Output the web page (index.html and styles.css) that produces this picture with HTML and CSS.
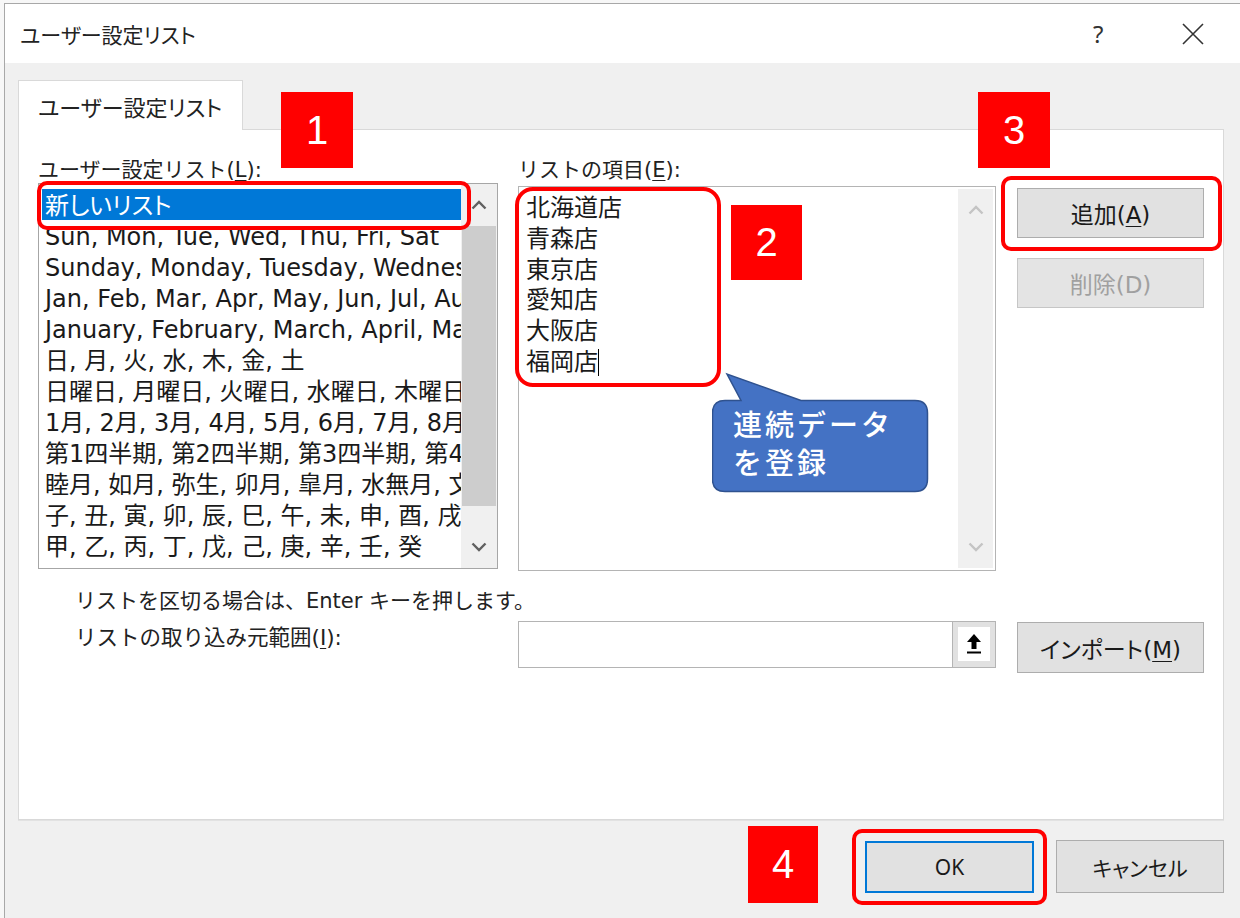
FILE: index.html
```html
<!DOCTYPE html>
<html lang="ja">
<head>
    <meta charset="UTF-8">
    <title>ユーザー設定リスト</title>
    <link rel="stylesheet" href="styles.css">
</head>
<body>
<div class="screen">

    <div class="window">
        <div class="titlebar">
            <div class="title">ユーザー設定リスト</div>
            <div class="help">?</div>
            <div class="close">
                <svg width="22" height="22" viewBox="0 0 22 22"><path d="M1 1 L21 21 M21 1 L1 21" stroke="#333" stroke-width="1.6" fill="none"/></svg>
            </div>
        </div>

        <div class="dialog-body">
            <div class="tabs">
                <div class="tab">ユーザー設定リスト</div>
            </div>

            <div class="panel">
                <div class="columns">
                    <div class="col col-lists">
                        <div class="label">ユーザー設定リスト(<u>L</u>):</div>
                        <div class="listbox">
                            <div class="list-items">
                                <div class="item selected">新しいリスト</div>
                                <div class="item">Sun, Mon, Tue, Wed, Thu, Fri, Sat</div>
                                <div class="item">Sunday, Monday, Tuesday, Wednesday, Thursday, Friday, Saturday</div>
                                <div class="item">Jan, Feb, Mar, Apr, May, Jun, Jul, Aug, Sep, Oct, Nov, Dec</div>
                                <div class="item">January, February, March, April, May, June</div>
                                <div class="item">日, 月, 火, 水, 木, 金, 土</div>
                                <div class="item">日曜日, 月曜日, 火曜日, 水曜日, 木曜日, 金曜日, 土曜日</div>
                                <div class="item">1月, 2月, 3月, 4月, 5月, 6月, 7月, 8月, 9月</div>
                                <div class="item">第1四半期, 第2四半期, 第3四半期, 第4四半期</div>
                                <div class="item">睦月, 如月, 弥生, 卯月, 皐月, 水無月, 文月</div>
                                <div class="item">子, 丑, 寅, 卯, 辰, 巳, 午, 未, 申, 酉, 戌, 亥</div>
                                <div class="item">甲, 乙, 丙, 丁, 戊, 己, 庚, 辛, 壬, 癸</div>
                            </div>
                            <div class="scrollbar">
                                <div class="arrow">
                                    <svg width="16" height="10" viewBox="0 0 16 10"><path d="M1.5 8.5 L8 2 L14.5 8.5" stroke="#606060" stroke-width="2.4" fill="none"/></svg>
                                </div>
                                <div class="track"><div class="thumb"></div></div>
                                <div class="arrow">
                                    <svg width="16" height="10" viewBox="0 0 16 10"><path d="M1.5 1.5 L8 8 L14.5 1.5" stroke="#606060" stroke-width="2.4" fill="none"/></svg>
                                </div>
                            </div>
                        </div>
                    </div>

                    <div class="col col-entries">
                        <div class="label">リストの項目(<u>E</u>):</div>
                        <div class="textarea">
                            <div class="entries">
                                <div class="entry">北海道店</div>
                                <div class="entry">青森店</div>
                                <div class="entry">東京店</div>
                                <div class="entry">愛知店</div>
                                <div class="entry">大阪店</div>
                                <div class="entry">福岡店<span class="caret"></span></div>
                            </div>
                            <div class="scrollbar light">
                                <div class="arrow">
                                    <svg width="16" height="10" viewBox="0 0 16 10"><path d="M1.5 8.5 L8 2 L14.5 8.5" stroke="#c4c4c4" stroke-width="2.4" fill="none"/></svg>
                                </div>
                                <div class="track"></div>
                                <div class="arrow">
                                    <svg width="16" height="10" viewBox="0 0 16 10"><path d="M1.5 1.5 L8 8 L14.5 1.5" stroke="#c4c4c4" stroke-width="2.4" fill="none"/></svg>
                                </div>
                            </div>
                        </div>
                    </div>

                    <div class="col col-buttons">
                        <button class="btn">追加(<u>A</u>)</button>
                        <button class="btn disabled">削除(D)</button>
                    </div>
                </div>

                <div class="hint">リストを区切る場合は、Enter キーを押します。</div>

                <div class="import-row">
                    <div class="import-label">リストの取り込み元範囲(<u>I</u>):</div>
                    <div class="range-input">
                        <div class="range-btn">
                            <svg width="16" height="22" viewBox="0 0 16 22"><path d="M8 1 L15 9 H10.5 V16 H5.5 V9 H1 Z" fill="#000"/><rect x="1" y="18.5" width="14" height="2" fill="#000"/></svg>
                        </div>
                    </div>
                    <button class="btn import-btn">インポート(<u>M</u>)</button>
                </div>
            </div>

            <div class="footer">
                <button class="btn ok">OK</button>
                <button class="btn">キャンセル</button>
            </div>
        </div>
    </div>

    <!-- annotations -->
    <div class="mark mark-1"></div>
    <div class="mark mark-2"></div>
    <div class="mark mark-3"></div>
    <div class="mark mark-4"></div>

    <div class="badge badge-1">1</div>
    <div class="badge badge-2">2</div>
    <div class="badge badge-3">3</div>
    <div class="badge badge-4">4</div>

    <div class="callout">
        <svg class="callout-shape" width="218" height="122" viewBox="0 0 218 122">
            <path d="M13 28.5 H29 L15 2 L89 28.5 H203 Q215.5 28.5 215.5 41 V107 Q215.5 119.5 203 119.5 H13 Q0.5 119.5 0.5 107 V41 Q0.5 28.5 13 28.5 Z" fill="#4472c4" stroke="#2f528f" stroke-width="1.5"/>
        </svg>
        <div class="callout-text">連続データ<br>を登録</div>
    </div>

</div>
</body>
</html>
```

FILE: styles.css
```css
* {
    box-sizing: border-box;
}

body {
    margin: 0;
    font-family: "DejaVu Sans", "Noto Sans CJK JP", sans-serif;
    color: #1a1a1a;
    background: #fafafa;
}

u {
    text-decoration: underline;
    text-underline-offset: 3px;
    text-decoration-thickness: 1px;
}

.screen {
    position: relative;
    width: 1240px;
    height: 918px;
    overflow: hidden;
    background: #f7f7f7;
}

.window {
    margin: 3px 0 0 4px;
    width: 1236px;
    height: 915px;
    border-top: 1px solid #a8a8a8;
    border-left: 1px solid #a8a8a8;
    background: #f0f0f0;
}

/* title bar */

.titlebar {
    height: 59px;
    background: #fff;
    display: flex;
    align-items: center;
    padding-left: 15px;
}

.title {
    font-size: 21px;
    font-feature-settings: "palt";
    flex: 1;
    color: #222;
}

.help {
    font-family: "Noto Sans", sans-serif;
    font-size: 24px;
    color: #333;
    width: 30px;
    margin-right: 59px;
}

.close {
    width: 58px;
    display: flex;
}

/* body */

.dialog-body {
    padding: 17px 16px 0 13px;
}

.tabs {
    display: flex;
}

.tab {
    width: 225px;
    height: 50px;
    background: #fff;
    border: 1px solid #d9d9d9;
    border-bottom: none;
    margin-bottom: -1px;
    position: relative;
    font-size: 22px;
    font-feature-settings: "palt";
    padding: 9px 0 0 19px;
    color: #222;
}

.panel {
    height: 691px;
    background: #fff;
    border: 1px solid #d9d9d9;
    box-shadow: 0 1px 0 #e2e2e2;
    padding: 27px 0 0 19px;
}

.columns {
    display: flex;
    gap: 20px;
}

.col {
    display: flex;
    flex-direction: column;
}

.label {
    font-size: 21px;
    height: 26px;
    line-height: 26px;
    color: #222;
}

/* left list */

.col-lists {
    width: 460px;
}

.listbox {
    height: 386px;
    border: 1px solid #a6a6a6;
    display: flex;
    background: #fff;
}

.list-items {
    flex: 1;
    overflow: hidden;
    padding: 5px 0 0 3px;
}

.item {
    height: 31px;
    padding: 4px 0 0 3px;
    line-height: 27px;
    font-size: 24px;
    font-feature-settings: "palt";
    white-space: nowrap;
    color: #1a1a1a;
}

.item.selected {
    background: #0078d7;
    color: #fff;
}

.scrollbar {
    width: 36px;
    display: flex;
    flex-direction: column;
    background: #f0f0f0;
}

.arrow {
    height: 42px;
    display: flex;
    align-items: center;
    justify-content: center;
}

.track {
    flex: 1;
}

.thumb {
    margin: 0 1px;
    height: 280px;
    background: #cdcdcd;
}

/* middle text area */

.col-entries {
    width: 478px;
}

.textarea {
    margin-top: 3px;
    height: 385px;
    border: 1px solid #b4b4b4;
    display: flex;
    background: #fff;
}

.entries {
    flex: 1;
    padding: 6px 0 0 7px;
}

.entry {
    height: 30.8px;
    line-height: 30.8px;
    font-size: 24px;
    color: #1a1a1a;
}

.caret {
    display: inline-block;
    width: 1px;
    height: 27px;
    background: #000;
    vertical-align: -6px;
    margin-left: 0;
}

.scrollbar.light {
    margin: 2px 2px 2px 0;
    width: 35px;
}

/* right buttons */

.col-buttons {
    margin-left: 1px;
    width: 187px;
    padding-top: 31px;
    gap: 20px;
}

.btn {
    font-family: "DejaVu Sans", "Noto Sans CJK JP", sans-serif;
    font-size: 23px;
    font-feature-settings: "palt";
    color: #1a1a1a;
    background: #e1e1e1;
    border: 1px solid #adadad;
    height: 50px;
    width: 187px;
    padding: 0;
}

.btn.disabled {
    color: #a0a0a0;
    background: #e4e4e4;
    border-color: #c6c6c6;
}

/* bottom of panel */

.hint {
    margin-top: 17px;
    padding-left: 37px;
    font-size: 21px;
    line-height: 26px;
    color: #222;
}

.import-row {
    margin-top: 7px;
    display: flex;
    align-items: flex-start;
}

.import-label {
    width: 480px;
    padding-left: 37px;
    font-size: 21.5px;
    line-height: 34px;
    color: #222;
}

.range-input {
    width: 478px;
    height: 47px;
    border: 1px solid #b4b4b4;
    background: #fff;
    display: flex;
    justify-content: flex-end;
}

.range-btn {
    width: 43px;
    height: 45px;
    background: #e1e1e1;
    border-left: 1px solid #b4b4b4;
    padding: 5px;
}

.range-btn svg {
    display: block;
    width: 32px;
    height: 34px;
    padding: 6px 8px;
    background: #fff;
}

.import-btn {
    margin: 1px 0 0 21px;
    height: 51px;
}

/* footer */

.footer {
    display: flex;
    justify-content: flex-end;
    gap: 22px;
    padding-top: 20px;
}

.footer .btn {
    width: 168px;
    height: 53px;
    font-family: "Noto Sans", "Noto Sans CJK JP", sans-serif;
    font-size: 21px;
}

.footer .btn.ok {
    width: 169px;
    height: 52px;
    margin-top: 1px;
    border: 2px solid #0078d7;
}

/* annotations */

.mark {
    position: absolute;
    border: 4px solid #ff0000;
    border-radius: 10px;
}

.mark-1 {
    left: 37px;
    top: 181px;
    width: 434px;
    height: 49px;
}

.mark-2 {
    left: 515px;
    top: 187px;
    width: 206px;
    height: 200px;
    border-radius: 18px;
}

.mark-3 {
    left: 1001px;
    top: 176px;
    width: 221px;
    height: 75px;
}

.mark-4 {
    left: 852px;
    top: 829px;
    width: 195px;
    height: 76px;
}

.badge {
    position: absolute;
    width: 72px;
    height: 76px;
    background: #ff0000;
    color: #fff;
    font-family: "Liberation Sans", Arial, sans-serif;
    font-size: 40px;
    display: flex;
    align-items: center;
    justify-content: center;
}

.badge-1 {
    left: 281px;
    top: 92px;
}

.badge-2 {
    left: 731px;
    top: 205px;
    width: 71px;
    height: 75px;
}

.badge-3 {
    left: 978px;
    top: 92px;
}

.badge-4 {
    left: 748px;
    top: 826px;
    width: 70px;
    height: 77px;
}

.callout {
    position: absolute;
    left: 712px;
    top: 372px;
    width: 218px;
    height: 122px;
}

.callout-shape {
    position: absolute;
    left: 0;
    top: 0;
}

.callout-text {
    position: relative;
    padding: 32px 0 0 21px;
    font-family: "Noto Sans CJK JP", sans-serif;
    font-size: 29px;
    line-height: 38px;
    letter-spacing: 3px;
    font-weight: 500;
    color: #fff;
}
```
